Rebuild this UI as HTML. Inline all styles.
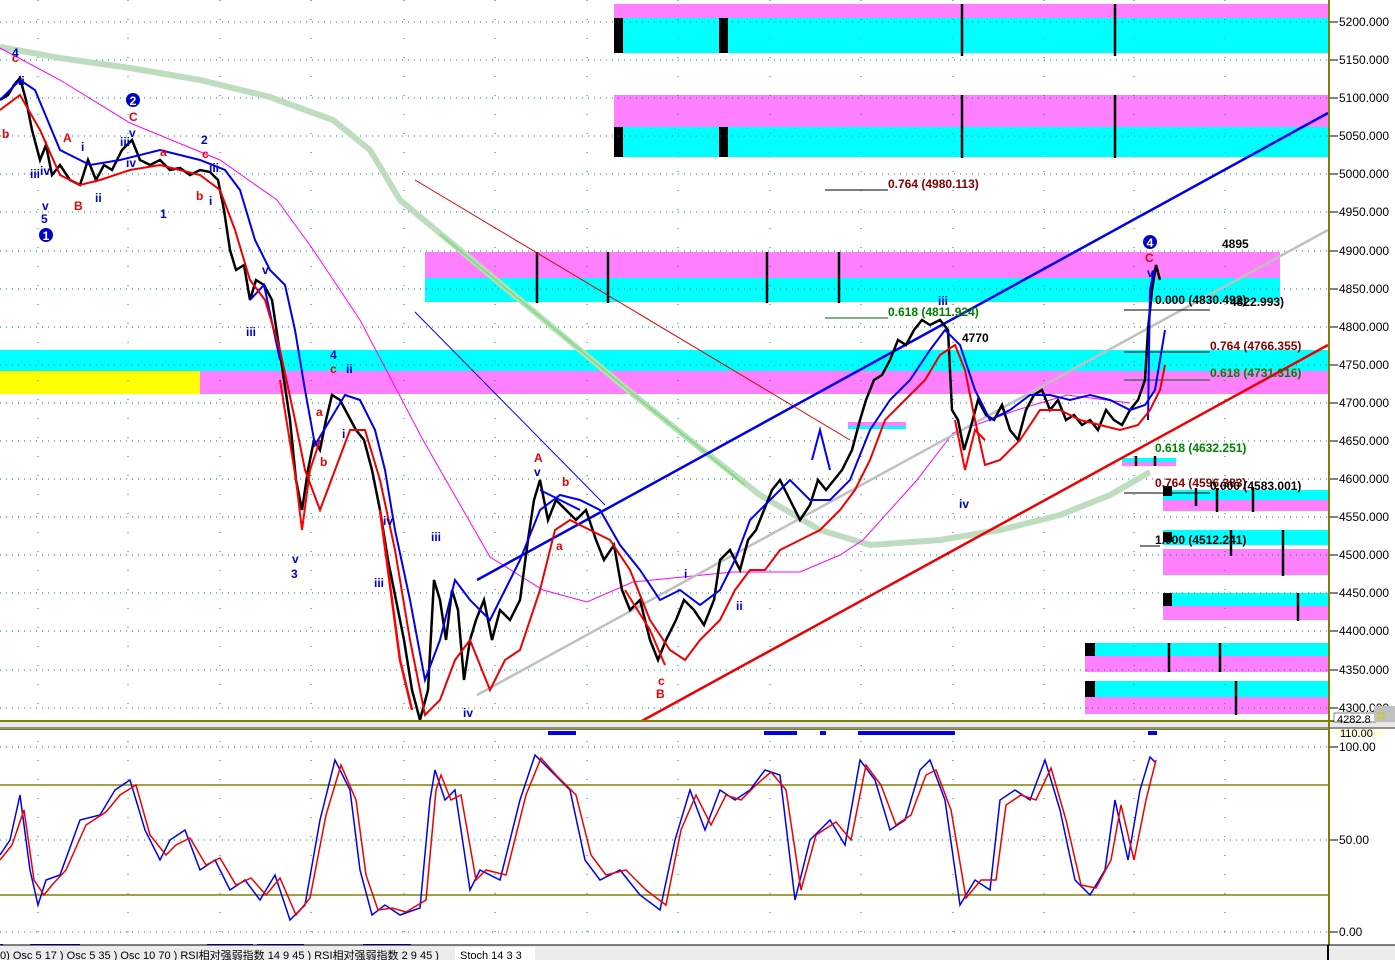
<!DOCTYPE html>
<html><head><meta charset="utf-8"><style>
html,body{margin:0;padding:0;background:#fff;width:1395px;height:960px;overflow:hidden}
svg text{font-family:"Liberation Sans","Noto Sans CJK SC",sans-serif}
</style></head><body>
<svg width="1395" height="960" viewBox="0 0 1395 960" xmlns="http://www.w3.org/2000/svg">
<rect x="0" y="0" width="1395" height="960" fill="#fff"/>
<g>
<rect x="614" y="4" width="714" height="14" fill="#ff80ff"/>
<rect x="614" y="18" width="714" height="35" fill="#00ffff"/>
<rect x="614" y="95" width="714" height="32" fill="#ff80ff"/>
<rect x="614" y="127" width="714" height="30" fill="#00ffff"/>
<rect x="425" y="252" width="855" height="26" fill="#ff80ff"/>
<rect x="425" y="278" width="855" height="24" fill="#00ffff"/>
<rect x="0" y="350" width="1328" height="21" fill="#00ffff"/>
<rect x="0" y="371" width="1328" height="23" fill="#ff80ff"/>
<rect x="0" y="371" width="200" height="23" fill="#ffff00"/>
<rect x="848" y="422" width="58" height="4" fill="#ff80ff"/><rect x="848" y="426" width="58" height="3" fill="#00ffff"/>
<rect x="1122" y="458" width="54" height="4" fill="#00ffff"/><rect x="1122" y="462" width="54" height="4" fill="#ff80ff"/>
<rect x="1163" y="490" width="165" height="10" fill="#00ffff"/><rect x="1163" y="500" width="165" height="11" fill="#ff80ff"/>
<rect x="1163" y="530" width="165" height="15" fill="#00ffff"/><rect x="1163" y="549" width="165" height="26" fill="#ff80ff"/>
<rect x="1163" y="593" width="165" height="13" fill="#00ffff"/><rect x="1163" y="606" width="165" height="14" fill="#ff80ff"/>
<rect x="1085" y="643" width="243" height="13" fill="#00ffff"/><rect x="1085" y="656" width="243" height="16" fill="#ff80ff"/>
<rect x="1085" y="681" width="243" height="16" fill="#00ffff"/><rect x="1085" y="697" width="243" height="17" fill="#ff80ff"/>
</g>
<g fill="#000">
<rect x="614" y="18" width="9" height="35"/><rect x="719" y="18" width="9" height="35"/>
<rect x="614" y="127" width="9" height="30"/><rect x="719" y="127" width="9" height="30"/>
<rect x="1163" y="486" width="9" height="10"/><rect x="1163" y="532" width="9" height="10"/><rect x="1163" y="593" width="9" height="13"/>
<rect x="1085" y="643" width="10" height="13"/><rect x="1085" y="681" width="10" height="16"/>
</g>
<g stroke="#000" stroke-width="2.5">
<line x1="962" y1="4" x2="962" y2="56"/><line x1="1115" y1="4" x2="1115" y2="56"/>
<line x1="962" y1="95" x2="962" y2="158"/><line x1="1115" y1="95" x2="1115" y2="158"/>
<line x1="537" y1="252" x2="537" y2="303"/><line x1="608" y1="252" x2="608" y2="303"/><line x1="767" y1="252" x2="767" y2="303"/><line x1="839" y1="252" x2="839" y2="303"/>
<line x1="1196" y1="488" x2="1196" y2="506"/><line x1="1217" y1="488" x2="1217" y2="512"/><line x1="1253" y1="488" x2="1253" y2="512"/>
<line x1="1231" y1="530" x2="1231" y2="556"/><line x1="1283" y1="530" x2="1283" y2="576"/>
<line x1="1298" y1="593" x2="1298" y2="621"/>
<line x1="1169" y1="643" x2="1169" y2="672"/><line x1="1220" y1="643" x2="1220" y2="672"/>
<line x1="1236" y1="681" x2="1236" y2="715"/>
<line x1="1136" y1="456" x2="1136" y2="466"/><line x1="1155" y1="456" x2="1155" y2="466"/>
</g>
<g stroke="#008080" stroke-width="1" stroke-dasharray="1 5">
<line x1="0" y1="22" x2="1328" y2="22"/><line x1="0" y1="60" x2="1328" y2="60"/><line x1="0" y1="98" x2="1328" y2="98"/><line x1="0" y1="136" x2="1328" y2="136"/><line x1="0" y1="174" x2="1328" y2="174"/><line x1="0" y1="212" x2="1328" y2="212"/><line x1="0" y1="251" x2="1328" y2="251"/><line x1="0" y1="289" x2="1328" y2="289"/><line x1="0" y1="327" x2="1328" y2="327"/><line x1="0" y1="365" x2="1328" y2="365"/><line x1="0" y1="403" x2="1328" y2="403"/><line x1="0" y1="441" x2="1328" y2="441"/><line x1="0" y1="479" x2="1328" y2="479"/><line x1="0" y1="517" x2="1328" y2="517"/><line x1="0" y1="555" x2="1328" y2="555"/><line x1="0" y1="593" x2="1328" y2="593"/><line x1="0" y1="631" x2="1328" y2="631"/><line x1="0" y1="670" x2="1328" y2="670"/><line x1="0" y1="708" x2="1328" y2="708"/>
<line x1="0" y1="747" x2="1328" y2="747"/><line x1="0" y1="840" x2="1328" y2="840"/><line x1="0" y1="932" x2="1328" y2="932"/>
</g>
<g stroke="#008080" stroke-width="1" stroke-dasharray="1 18">
<line x1="38" y1="0" x2="38" y2="945"/><line x1="128" y1="0" x2="128" y2="945"/><line x1="220" y1="0" x2="220" y2="945"/><line x1="311" y1="0" x2="311" y2="945"/><line x1="404" y1="0" x2="404" y2="945"/><line x1="495" y1="0" x2="495" y2="945"/><line x1="587" y1="0" x2="587" y2="945"/><line x1="678" y1="0" x2="678" y2="945"/><line x1="770" y1="0" x2="770" y2="945"/><line x1="861" y1="0" x2="861" y2="945"/><line x1="953" y1="0" x2="953" y2="945"/><line x1="1044" y1="0" x2="1044" y2="945"/><line x1="1134" y1="0" x2="1134" y2="945"/><line x1="1225" y1="0" x2="1225" y2="945"/>
</g>
<polyline points="0,47 60,58 130,68 200,80 270,97 333,120 370,150 400,200 460,250 520,300 580,350 640,400 700,448 760,495 820,530 870,545 940,540 1000,530 1060,515 1110,495 1150,472" fill="none" stroke="#bedcbe" stroke-width="6"/>
<polyline points="440,234 520,300 580,350 640,400 700,448 745,485" fill="none" stroke="#80e080" stroke-width="2"/>
<polyline points="0,48 60,80 130,123 220,160 277,200 312,248 360,320 423,440 490,557 543,590 587,602 633,582 733,572 800,572 840,555 863,540 917,480 953,433 1017,410 1067,395 1130,403" fill="none" stroke="#ff00ff" stroke-width="1"/>
<line x1="415" y1="180" x2="850" y2="440" stroke="#e00000" stroke-width="1"/>
<line x1="415" y1="312" x2="605" y2="505" stroke="#0000ff" stroke-width="1"/>
<line x1="477" y1="580" x2="1328" y2="113" stroke="#0000ee" stroke-width="2.5"/>
<line x1="477" y1="695" x2="1328" y2="230" stroke="#c0c0c0" stroke-width="2.5"/>
<line x1="640" y1="722" x2="1328" y2="345" stroke="#ee0000" stroke-width="2.5"/>
<g stroke-width="1">
<line x1="825" y1="190" x2="888" y2="190" stroke="#000"/>
<line x1="825" y1="318" x2="888" y2="318" stroke="#006000"/>
<line x1="1124" y1="310" x2="1210" y2="310" stroke="#000"/>
<line x1="1124" y1="352" x2="1210" y2="352" stroke="#000"/>
<line x1="1124" y1="380" x2="1210" y2="380" stroke="#006000"/>
<line x1="1124" y1="493" x2="1210" y2="493" stroke="#000"/>
<line x1="1140" y1="546" x2="1160" y2="546" stroke="#000"/>
</g>
<polyline points="0,100 8,95 14,85 20,78 26,100 32,130 40,160 46,145 52,175 60,165 70,180 80,185 88,160 96,180 104,165 112,170 122,150 132,140 140,160 150,165 160,160 170,170 180,168 190,175 200,170 210,172 218,180 224,210 230,250 236,270 244,265 250,300 256,280 264,285 272,300 278,340 284,380 290,420 296,480 302,510 308,470 314,440 320,450 326,420 332,395 340,400 348,415 356,430 364,440 372,470 380,510 388,560 396,600 404,640 412,690 420,720 428,690 434,580 440,600 446,640 452,590 458,610 464,680 470,640 476,620 484,600 492,640 500,610 510,620 520,600 528,540 534,500 540,480 548,520 556,500 566,510 576,520 586,510 596,540 604,560 614,545 622,590 630,610 640,600 650,640 658,660 666,640 676,620 684,600 694,610 704,625 714,600 720,560 730,550 740,570 748,540 756,530 764,510 772,490 780,480 790,500 800,520 810,505 818,480 826,490 834,480 842,470 852,450 860,420 866,400 874,380 882,375 890,360 898,340 906,345 914,330 922,320 930,325 940,320 948,330 952,410 958,420 964,450 970,430 978,400 986,415 994,420 1002,405 1010,430 1018,440 1026,410 1034,395 1042,390 1050,410 1058,400 1066,420 1074,415 1082,425 1090,420 1098,430 1106,410 1114,420 1122,425 1130,410 1138,400 1145,380 1148,330 1152,290 1156,265 1160,280" fill="none" stroke="#000" stroke-width="2.5"/>
<polyline points="250,300 264,285 280,360" fill="none" stroke="#00f" stroke-width="2"/>
<polyline points="280,380 296,480 302,530 310,470 320,440" fill="none" stroke="#f00" stroke-width="2"/>
<polyline points="380,510 400,660 412,710" fill="none" stroke="#f00" stroke-width="2.5"/>
<polyline points="540,490 560,500 580,510" fill="none" stroke="#00f" stroke-width="2"/>
<polyline points="625,590 650,630 665,665" fill="none" stroke="#f00" stroke-width="2"/>
<polyline points="812,460 820,430 830,470" fill="none" stroke="#00f" stroke-width="2"/>
<polyline points="955,420 965,470 975,430 985,440" fill="none" stroke="#f00" stroke-width="2"/>
<polyline points="1148,420 1150,290 1154,270" fill="none" stroke="#00f" stroke-width="2"/>
<polyline points="0,100 20,80 35,90 60,150 90,165 120,160 160,150 200,160 225,170 240,190 255,240 270,270 285,285 295,330 305,390 315,445 330,420 345,395 360,400 375,430 385,470 395,530 410,600 425,680 440,640 455,580 470,600 490,620 505,590 520,560 540,510 560,495 580,500 600,510 620,545 640,570 660,600 680,590 700,605 720,590 735,560 750,520 770,500 790,480 810,500 830,500 850,480 870,430 890,400 910,380 930,350 945,330 960,345 975,390 990,420 1010,410 1030,395 1050,395 1070,400 1090,395 1110,400 1130,410 1145,405 1155,390 1160,360 1165,330" fill="none" stroke="#0000ee" stroke-width="2"/>
<polyline points="0,110 20,95 40,130 60,175 80,185 100,180 130,170 160,165 200,175 220,190 235,230 250,280 265,300 280,350 295,420 305,470 320,510 335,470 350,430 365,430 380,480 395,550 410,640 425,715 440,700 455,660 470,640 490,690 505,660 520,650 540,590 555,530 570,520 590,530 610,540 630,570 650,620 670,650 685,660 700,640 720,620 735,590 750,570 765,570 780,550 800,540 820,530 840,510 855,490 870,460 885,420 905,400 925,380 940,355 955,345 965,370 975,420 985,465 1000,460 1020,440 1040,410 1060,410 1080,420 1100,425 1120,430 1138,425 1150,410 1160,390 1165,365" fill="none" stroke="#ee0000" stroke-width="2"/>
<g font-size="12" font-weight="bold">
<text x="888" y="188" fill="#800000">0.764 (4980.113)</text>
<text x="888" y="316" fill="#008000">0.618 (4811.924)</text>
<text x="1155" y="304" fill="#000">0.000 (4830.492)</text>
<text x="1230" y="306" fill="#000">4822.993)</text>
<text x="1210" y="350" fill="#800000">0.764 (4766.355)</text>
<text x="1210" y="377" fill="#008000">0.618 (4731.316)</text>
<text x="1155" y="452" fill="#008000">0.618 (4632.251)</text>
<text x="1155" y="487" fill="#800000">0.764 (4596.383)</text>
<text x="1210" y="490" fill="#000">0.000 (4583.001)</text>
<text x="1155" y="544" fill="#000">1.000 (4512.241)</text>
<text x="1222" y="248" fill="#000">4895</text>
<text x="962" y="342" fill="#000">4770</text>
</g>
<g font-size="12" font-weight="bold">
<g fill="#ee0000">
<text x="12" y="62">c</text><text x="2" y="138">b</text><text x="63" y="142">A</text><text x="74" y="210">B</text><text x="129" y="121">C</text><text x="160" y="156">a</text><text x="196" y="200">b</text><text x="202" y="158">c</text><text x="330" y="373">c</text><text x="316" y="416">a</text><text x="320" y="466">b</text><text x="534" y="462">A</text><text x="562" y="486">b</text><text x="556" y="550">a</text><text x="658" y="685">c</text><text x="656" y="698">B</text><text x="1145" y="262">C</text>
</g>
<g fill="#0000cc">
<text x="12" y="57">4</text><text x="18" y="85">ii</text><text x="40" y="175">iv</text><text x="30" y="178">iii</text><text x="42" y="210">v</text><text x="41" y="223">5</text><text x="81" y="151">i</text><text x="95" y="202">ii</text><text x="120" y="146">iii</text><text x="129" y="137">v</text><text x="126" y="167">iv</text><text x="160" y="218">1</text><text x="201" y="144">2</text><text x="209" y="172">iii</text><text x="209" y="205">i</text><text x="262" y="274">v</text><text x="246" y="336">iii</text><text x="330" y="359">4</text><text x="346" y="373">ii</text><text x="342" y="438">i</text><text x="383" y="525">iv</text><text x="292" y="563">v</text><text x="291" y="578">3</text><text x="374" y="587">iii</text><text x="431" y="541">iii</text><text x="463" y="717">iv</text><text x="534" y="476">v</text><text x="684" y="578">i</text><text x="736" y="610">ii</text><text x="938" y="305">iii</text><text x="959" y="508">iv</text><text x="1147" y="277">v</text>
</g>
</g>
<g>
<circle cx="133" cy="100" r="7" fill="#0000cc"/><text x="133" y="105" font-size="12" font-weight="bold" fill="#fff" text-anchor="middle">2</text>
<circle cx="46" cy="235" r="7" fill="#0000cc"/><text x="46" y="240" font-size="12" font-weight="bold" fill="#fff" text-anchor="middle">1</text>
<circle cx="1150" cy="242" r="7" fill="#0000cc"/><text x="1150" y="247" font-size="12" font-weight="bold" fill="#fff" text-anchor="middle">4</text>
</g>
<rect x="0" y="720" width="1395" height="2" fill="#808000"/>
<rect x="0" y="722" width="1395" height="6" fill="#e8e8e8"/>
<rect x="0" y="727" width="1395" height="2" fill="#909090"/>
<rect x="0" y="729" width="1328" height="1" fill="#808000"/>
<line x1="0" y1="785" x2="1328" y2="785" stroke="#808000" stroke-width="1.5"/>
<line x1="0" y1="895" x2="1328" y2="895" stroke="#808000" stroke-width="1.5"/>
<g fill="#0000ee">
<rect x="548" y="731" width="28" height="4"/><rect x="764" y="731" width="33" height="4"/><rect x="820" y="731" width="6" height="4"/><rect x="858" y="731" width="97" height="4"/><rect x="1148" y="731" width="9" height="4"/>
<rect x="0" y="944" width="3" height="4"/><rect x="30" y="944" width="50" height="4"/><rect x="207" y="944" width="46" height="4"/><rect x="257" y="944" width="47" height="4"/><rect x="363" y="944" width="48" height="4"/>
</g>
<polyline points="0,855 10,840 20,795 30,870 38,905 46,880 60,875 80,820 100,815 115,790 130,780 145,830 160,860 170,840 185,830 200,870 215,860 230,890 245,880 260,900 275,875 290,920 305,905 320,820 335,760 350,790 360,870 372,915 385,905 400,915 420,908 430,800 435,770 445,800 455,790 470,890 480,870 500,880 520,800 535,755 550,770 570,790 585,860 600,880 620,870 640,895 660,910 675,840 690,790 705,830 720,790 735,800 750,790 765,770 780,775 795,900 810,840 830,820 845,845 860,760 875,780 890,830 905,820 920,770 930,760 945,800 960,905 975,880 990,890 1000,800 1015,790 1030,800 1045,760 1060,810 1075,880 1090,895 1105,870 1115,800 1128,860 1140,790 1150,757 1155,762" fill="none" stroke="#0000ee" stroke-width="1.5"/>
<polyline points="0,860 12,845 24,810 34,880 44,895 52,885 66,870 86,825 106,812 120,795 136,785 150,835 166,855 176,845 190,838 206,865 220,858 236,885 251,878 266,895 280,878 296,915 310,898 326,815 341,765 356,800 366,875 378,910 392,908 406,912 426,900 436,790 441,775 451,800 461,795 476,880 486,870 506,875 526,795 541,758 556,775 576,795 591,855 606,875 626,870 646,890 666,905 681,830 696,795 711,825 726,795 741,800 756,785 771,772 786,790 801,890 816,835 836,822 851,840 866,765 881,785 896,825 911,815 926,775 936,770 951,810 966,898 981,880 996,880 1006,805 1021,795 1036,800 1051,768 1066,820 1081,885 1096,888 1111,860 1121,805 1134,860 1146,800 1156,760" fill="none" stroke="#ee0000" stroke-width="1.5"/>
<rect x="1328" y="0" width="2" height="960" fill="#808000"/>
<g stroke="#000" stroke-width="1">
<line x1="1330" y1="22" x2="1338" y2="22"/><line x1="1330" y1="60" x2="1338" y2="60"/><line x1="1330" y1="98" x2="1338" y2="98"/><line x1="1330" y1="136" x2="1338" y2="136"/><line x1="1330" y1="174" x2="1338" y2="174"/><line x1="1330" y1="212" x2="1338" y2="212"/><line x1="1330" y1="251" x2="1338" y2="251"/><line x1="1330" y1="289" x2="1338" y2="289"/><line x1="1330" y1="327" x2="1338" y2="327"/><line x1="1330" y1="365" x2="1338" y2="365"/><line x1="1330" y1="403" x2="1338" y2="403"/><line x1="1330" y1="441" x2="1338" y2="441"/><line x1="1330" y1="479" x2="1338" y2="479"/><line x1="1330" y1="517" x2="1338" y2="517"/><line x1="1330" y1="555" x2="1338" y2="555"/><line x1="1330" y1="593" x2="1338" y2="593"/><line x1="1330" y1="631" x2="1338" y2="631"/><line x1="1330" y1="670" x2="1338" y2="670"/><line x1="1330" y1="708" x2="1338" y2="708"/>
<line x1="1330" y1="747" x2="1338" y2="747"/><line x1="1330" y1="840" x2="1338" y2="840"/><line x1="1330" y1="932" x2="1338" y2="932"/>
</g>
<g font-size="12" fill="#000">
<text x="1339" y="26">5200.000</text><text x="1339" y="64">5150.000</text><text x="1339" y="102">5100.000</text><text x="1339" y="140">5050.000</text><text x="1339" y="178">5000.000</text><text x="1339" y="216">4950.000</text><text x="1339" y="255">4900.000</text><text x="1339" y="293">4850.000</text><text x="1339" y="331">4800.000</text><text x="1339" y="369">4750.000</text><text x="1339" y="407">4700.000</text><text x="1339" y="445">4650.000</text><text x="1339" y="483">4600.000</text><text x="1339" y="521">4550.000</text><text x="1339" y="559">4500.000</text><text x="1339" y="597">4450.000</text><text x="1339" y="635">4400.000</text><text x="1339" y="674">4350.000</text><text x="1339" y="712">4300.000</text>
<text x="1339" y="751">100.00</text><text x="1339" y="844">50.00</text><text x="1339" y="936">0.00</text>
</g>
<rect x="1334" y="713" width="42" height="9" fill="#fff" stroke="#000" stroke-width="0.5"/>
<text x="1337" y="723" font-size="11">4282.8</text>
<rect x="1374" y="706" width="21" height="16" fill="#c0c0c0"/>
<text x="1376" y="719" font-size="11" fill="#cc0">⚖</text>
<rect x="1334" y="729" width="50" height="8" fill="#ffffe0"/>
<text x="1340" y="737" font-size="11">110.00</text>
<rect x="0" y="945" width="1395" height="15" fill="#ececec"/>
<line x1="0" y1="945" x2="1395" y2="945" stroke="#000"/>
<g font-size="11" fill="#000">
<text x="0" y="959">0)  Osc 5 17 )  Osc 5 35 )  Osc 10 70 )  RSI相对强弱指数 14  9  45 )  RSI相对强弱指数 2  9  45 )</text>
</g>
<rect x="455" y="947" width="80" height="13" fill="#fff"/>
<text x="460" y="959" font-size="11">Stoch 14  3  3</text>
<line x1="1328" y1="945" x2="1328" y2="960" stroke="#000" stroke-width="2"/>
</svg>
</body></html>
